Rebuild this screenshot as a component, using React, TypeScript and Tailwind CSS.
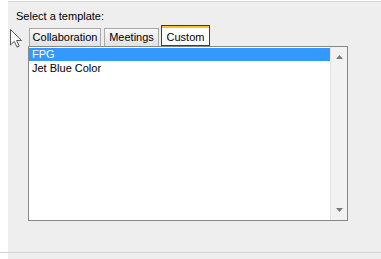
import React from 'react';

const font = { fontFamily: '"Liberation Sans", Arial, sans-serif' };

const items = ['FPG', 'Jet Blue Color'];

function Cursor() {
  return (
    <svg width="13" height="19" viewBox="0 0 13 19" className="absolute left-[10px] top-[29px]">
      <path
        d="M0.5 0.5 L0.5 16 L4.3 12.4 L7 18.2 L9.2 17.2 L6.6 11.5 L11.6 11.5 Z"
        fill="#ffffff"
        stroke="#555a60"
        strokeWidth="1"
        strokeLinejoin="miter"
      />
    </svg>
  );
}

function Tab({ label, width, active }: { label: string; width: string; active?: boolean }) {
  if (active) {
    return (
      <div className={`${width} h-[21px] flex flex-col border border-[#3c3c3c] bg-white`}>
        <div className="h-[2px] bg-[#f4c22b]" />
        <div className="flex-1 flex items-center justify-center pt-[1px] leading-[13px]">{label}</div>
      </div>
    );
  }
  return (
    <div
      className={`${width} h-[18px] flex items-center justify-center border border-b-0 border-[#a8a8a8] bg-gradient-to-b from-[#f8f8f8] to-[#e2e2e2] leading-[13px]`}
    >
      {label}
    </div>
  );
}

export default function App() {
  return (
    <div className="relative w-[381px] h-[259px] flex flex-col bg-white text-[11px] text-black overflow-hidden" style={font}>
      <div className="flex h-[252px]">
        <div className="w-[8px]" />
        <div className="flex-1 mt-[1px] border-t border-[#d6d6d6] bg-[#eeeeee] pt-[8px] pl-[8px]">
          <div className="leading-[13px]">Select a template:</div>
          <div className="mt-[2px] ml-[13px] flex items-end gap-[3px] h-[21px]">
            <Tab label="Collaboration" width="w-[72px]" />
            <Tab label="Meetings" width="w-[55px]" />
            <div className="-ml-[1px]">
              <Tab label="Custom" width="w-[49px]" active />
            </div>
          </div>
          <div className="ml-[12px] w-[320px] h-[175px] border border-[#828790] bg-white flex">
            <div className="flex-1">
              {items.map((it, i) => (
                <div
                  key={it}
                  className={`h-[13px] mt-[1px] first:mt-[1px] pl-[3px] leading-[13px] ${i === 0 ? 'bg-[#3399ff] text-white' : ''}`}
                >
                  {it}
                </div>
              ))}
            </div>
            <div className="w-[17px] bg-[#f2f2f2] border-l border-[#e4e4e4] flex flex-col items-center justify-between py-[8px]">
              <svg width="7" height="4" viewBox="0 0 7 4">
                <path d="M3.5 0 L7 4 L0 4 Z" fill="#7a7a7a" />
              </svg>
              <svg width="7" height="4" viewBox="0 0 7 4">
                <path d="M0 0 L7 0 L3.5 4 Z" fill="#7a7a7a" />
              </svg>
            </div>
          </div>
        </div>
      </div>
      <div className="h-px bg-[#d4d4d4]" />
      <div className="flex flex-1">
        <div className="w-[8px]" />
        <div className="flex-1 bg-[#eeeeee]" />
      </div>
      <Cursor />
    </div>
  );
}
